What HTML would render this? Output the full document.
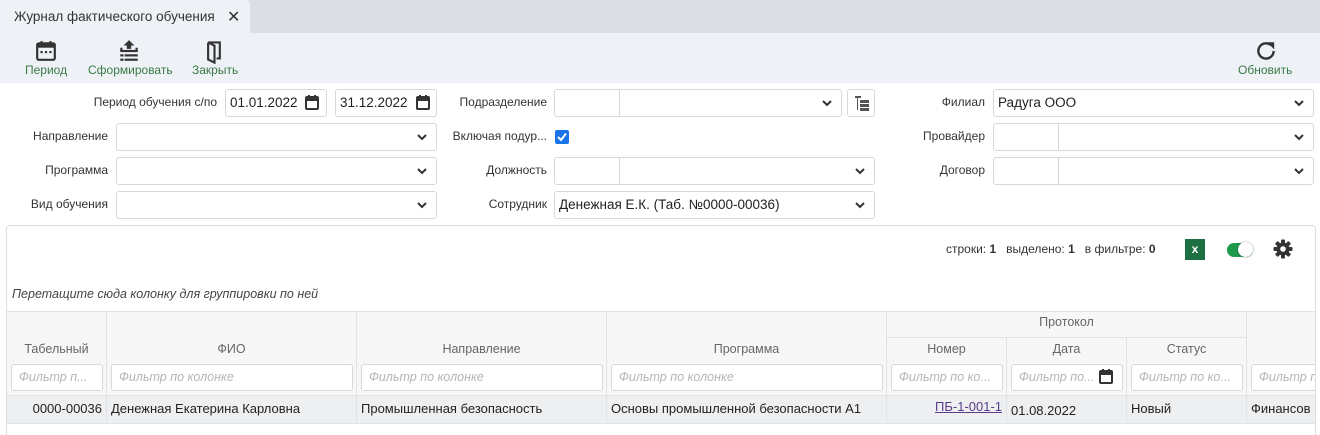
<!DOCTYPE html>
<html><head><meta charset="utf-8"><style>
*{box-sizing:border-box;margin:0;padding:0}
html,body{width:1320px;height:435px;overflow:hidden}
body{background:#fff;font-family:"Liberation Sans","DejaVu Sans",sans-serif;font-size:12px;color:#333;position:relative}
.a{position:absolute}
.lbl{position:absolute;text-align:right;font-size:12px;color:#333}
.inp{position:absolute;border:1px solid #d6d8dd;border-radius:3px;background:#fff;height:28px;font-size:13.5px;color:#222;padding:5px 4px}
.chev{position:absolute;right:8px;top:8px;width:12px;height:10px}
.sep{position:absolute;left:64px;top:0;bottom:0;width:1px;background:#d6d8dd}
.th{position:absolute;border-right:1px solid #e2e3e6;text-align:center;color:#666;font-size:12.5px}
.flt{position:absolute;height:27px;border:1px solid #d6d8dd;border-radius:3px;background:#fff;font-style:italic;color:#b3b5ba;font-size:12.5px;padding:5px 7px;white-space:nowrap;overflow:hidden}
.td{position:absolute;top:396px;height:28px;border-right:1px solid #e2e3e6;font-size:13px;color:#222;padding:5px 4px;white-space:nowrap;overflow:hidden}
.tb{position:absolute;top:63px;color:#3a7a45;font-size:12px}
</style></head><body>
<div class="a" style="left:0;top:0;width:1320px;height:33px;background:#dcdee3"></div>
<div class="a" style="left:0;top:0;width:250px;height:33px;background:#eef1f6;border-radius:0 4px 0 0"></div>
<div class="a" style="left:14px;top:9px;font-size:13.5px;color:#333">Журнал фактического обучения</div>
<div class="a" style="left:227px;top:7px;font-size:16px;font-weight:bold;color:#333">✕</div>
<div class="a" style="left:0;top:33px;width:1320px;height:50px;background:#eef1f6"></div>
<svg class="a" style="left:35px;top:40px" width="22" height="22" viewBox="0 0 20 20"><rect x="2" y="3" width="16" height="15" rx="1.5" fill="none" stroke="#333" stroke-width="2"/><rect x="2" y="3" width="16" height="4" fill="#333"/><rect x="5" y="1" width="2" height="4" fill="#333"/><rect x="13" y="1" width="2" height="4" fill="#333"/><rect x="5" y="10" width="2" height="2" fill="#333"/><rect x="9" y="10" width="2" height="2" fill="#333"/><rect x="13" y="10" width="2" height="2" fill="#333"/></svg>
<div class="tb" style="left:25px">Период</div>
<svg class="a" style="left:118px;top:39px" width="22" height="24" viewBox="0 0 20 22"><path d="M10 1 L5 6 H8 V9 H12 V6 H15 Z" fill="#333"/><rect x="2" y="10" width="16" height="2" fill="#333"/><rect x="2" y="14" width="3" height="2" fill="#333"/><rect x="6" y="14" width="12" height="2" fill="#333"/><rect x="2" y="18" width="3" height="2" fill="#333"/><rect x="6" y="18" width="12" height="2" fill="#333"/><rect x="2" y="8" width="2" height="3" fill="#333"/><rect x="16" y="8" width="2" height="3" fill="#333"/></svg>
<div class="tb" style="left:88px">Сформировать</div>
<svg class="a" style="left:206px;top:40px" width="17" height="24" viewBox="0 0 16 22"><path d="M2 2 H13 V17 H10 M2 2 V18 L8 21 V5 L2 2" fill="none" stroke="#333" stroke-width="2"/></svg>
<div class="tb" style="left:192px">Закрыть</div>
<svg class="a" style="left:1254px;top:39px" width="24" height="24" viewBox="0 0 22 22"><path d="M18 11 A7 7 0 1 1 15.5 5.6" fill="none" stroke="#333" stroke-width="2.2"/><path d="M12 3 H18.5 V9.5 Z" fill="#333"/></svg>
<div class="tb" style="left:1238px">Обновить</div>

<div class="lbl" style="left:60px;width:157px;top:95px">Период обучения с/по</div>
<div class="inp" style="left:225px;top:89px;width:102px">01.01.2022</div>
<svg class="a" style="left:305px;top:95px" width="14" height="15" viewBox="0 0 14 15"><rect x="1" y="2" width="12" height="12" rx="1" fill="none" stroke="#333" stroke-width="2"/><rect x="1" y="2" width="12" height="4" fill="#333"/><rect x="3" y="0" width="2" height="3" fill="#333"/><rect x="9" y="0" width="2" height="3" fill="#333"/></svg>
<div class="inp" style="left:335px;top:89px;width:102px">31.12.2022</div>
<svg class="a" style="left:416px;top:95px" width="14" height="15" viewBox="0 0 14 15"><rect x="1" y="2" width="12" height="12" rx="1" fill="none" stroke="#333" stroke-width="2"/><rect x="1" y="2" width="12" height="4" fill="#333"/><rect x="3" y="0" width="2" height="3" fill="#333"/><rect x="9" y="0" width="2" height="3" fill="#333"/></svg>

<div class="lbl" style="left:0;width:108px;top:129px">Направление</div>
<div class="inp" style="left:116px;top:123px;width:321px"><svg class="chev" viewBox="0 0 12 10"><path d="M2 3 L6 7 L10 3" fill="none" stroke="#333" stroke-width="2"/></svg></div>
<div class="lbl" style="left:0;width:108px;top:163px">Программа</div>
<div class="inp" style="left:116px;top:157px;width:321px"><svg class="chev" viewBox="0 0 12 10"><path d="M2 3 L6 7 L10 3" fill="none" stroke="#333" stroke-width="2"/></svg></div>
<div class="lbl" style="left:0;width:108px;top:197px">Вид обучения</div>
<div class="inp" style="left:116px;top:191px;width:321px"><svg class="chev" viewBox="0 0 12 10"><path d="M2 3 L6 7 L10 3" fill="none" stroke="#333" stroke-width="2"/></svg></div>

<div class="lbl" style="left:440px;width:107px;top:95px">Подразделение</div>
<div class="inp" style="left:554px;top:89px;width:288px"><div class="sep"></div><svg class="chev" viewBox="0 0 12 10"><path d="M2 3 L6 7 L10 3" fill="none" stroke="#333" stroke-width="2"/></svg></div>
<div class="inp" style="left:847px;top:89px;width:28px;padding:0"><svg class="a" style="left:6px;top:5px" width="16" height="17" viewBox="0 0 16 17"><rect x="1" y="1" width="6" height="2" fill="#555"/><rect x="3" y="3" width="1" height="12" fill="#555"/><rect x="6" y="5" width="9" height="3" fill="#555"/><rect x="6" y="9" width="9" height="3" fill="#555"/><rect x="6" y="13" width="9" height="3" fill="#555"/></svg></div>
<div class="lbl" style="left:440px;width:107px;top:129px">Включая подур...</div>
<div class="a" style="left:555px;top:130px;width:14px;height:14px;background:#1a73e8;border-radius:2px"><svg width="14" height="14" viewBox="0 0 14 14"><path d="M3 7 L6 10 L11 3.5" fill="none" stroke="#fff" stroke-width="2"/></svg></div>
<div class="lbl" style="left:440px;width:107px;top:163px">Должность</div>
<div class="inp" style="left:554px;top:157px;width:321px"><div class="sep"></div><svg class="chev" viewBox="0 0 12 10"><path d="M2 3 L6 7 L10 3" fill="none" stroke="#333" stroke-width="2"/></svg></div>
<div class="lbl" style="left:440px;width:107px;top:197px">Сотрудник</div>
<div class="inp" style="left:554px;top:191px;width:321px">Денежная Е.К. (Таб. №0000-00036)<svg class="chev" viewBox="0 0 12 10"><path d="M2 3 L6 7 L10 3" fill="none" stroke="#333" stroke-width="2"/></svg></div>

<div class="lbl" style="left:880px;width:105px;top:95px">Филиал</div>
<div class="inp" style="left:993px;top:89px;width:321px">Радуга ООО<svg class="chev" viewBox="0 0 12 10"><path d="M2 3 L6 7 L10 3" fill="none" stroke="#333" stroke-width="2"/></svg></div>
<div class="lbl" style="left:880px;width:105px;top:129px">Провайдер</div>
<div class="inp" style="left:993px;top:123px;width:321px"><div class="sep"></div><svg class="chev" viewBox="0 0 12 10"><path d="M2 3 L6 7 L10 3" fill="none" stroke="#333" stroke-width="2"/></svg></div>
<div class="lbl" style="left:880px;width:105px;top:163px">Договор</div>
<div class="inp" style="left:993px;top:157px;width:321px"><div class="sep"></div><svg class="chev" viewBox="0 0 12 10"><path d="M2 3 L6 7 L10 3" fill="none" stroke="#333" stroke-width="2"/></svg></div>

<div class="a" style="left:6px;top:225px;width:1310px;height:210px;border:1px solid #dcdde1;border-bottom:none;border-radius:4px 4px 0 0"></div>
<div class="a" style="left:946px;top:242px;font-size:12px;color:#333">строки: <b>1</b>&nbsp;&nbsp; выделено: <b>1</b>&nbsp;&nbsp; в фильтре: <b>0</b></div>
<div class="a" style="left:1185px;top:239px;width:20px;height:21px;background:#1d7044;color:#fff;font-size:12px;font-weight:bold;text-align:center;line-height:21px">x</div>
<div class="a" style="left:1227px;top:243px;width:26px;height:14px;border-radius:7px;background:#1e9a4c"></div>
<div class="a" style="left:1238px;top:242px;width:15px;height:15px;border-radius:50%;background:#fff;box-shadow:0 0 2px rgba(0,0,0,.4)"></div>
<svg class="a" style="left:1273px;top:239px" width="20" height="20" viewBox="0 0 20 20"><g fill="#333"><circle cx="10" cy="10" r="6.5"/><rect x="8" y="0.5" width="4" height="19" rx="1"/><rect x="8" y="0.5" width="4" height="19" rx="1" transform="rotate(45 10 10)"/><rect x="8" y="0.5" width="4" height="19" rx="1" transform="rotate(90 10 10)"/><rect x="8" y="0.5" width="4" height="19" rx="1" transform="rotate(135 10 10)"/></g><circle cx="10" cy="10" r="2.8" fill="#fff"/></svg>
<div class="a" style="left:12px;top:287px;font-style:italic;color:#444;font-size:12.5px">Перетащите сюда колонку для группировки по ней</div>

<div class="a" style="left:7px;top:311px;width:1308px;height:85px;background:#f7f7f8;border-top:1px solid #e2e3e6;border-bottom:1px solid #e2e3e6"></div>
<div class="th" style="left:7px;top:312px;width:100px;height:84px;padding-top:30px">Табельный</div>
<div class="th" style="left:107px;top:312px;width:250px;height:84px;padding-top:30px">ФИО</div>
<div class="th" style="left:357px;top:312px;width:250px;height:84px;padding-top:30px">Направление</div>
<div class="th" style="left:607px;top:312px;width:280px;height:84px;padding-top:30px">Программа</div>
<div class="th" style="left:887px;top:312px;width:360px;height:26px;padding-top:3px;border-bottom:1px solid #e2e3e6">Протокол</div>
<div class="th" style="left:887px;top:338px;width:120px;height:58px;padding-top:4px">Номер</div>
<div class="th" style="left:1007px;top:338px;width:120px;height:58px;padding-top:4px">Дата</div>
<div class="th" style="left:1127px;top:338px;width:120px;height:58px;padding-top:4px">Статус</div>
<div class="flt" style="left:11px;top:364px;width:92px">Фильтр п...</div>
<div class="flt" style="left:111px;top:364px;width:242px">Фильтр по колонке</div>
<div class="flt" style="left:361px;top:364px;width:242px">Фильтр по колонке</div>
<div class="flt" style="left:611px;top:364px;width:272px">Фильтр по колонке</div>
<div class="flt" style="left:891px;top:364px;width:112px">Фильтр по ко...</div>
<div class="flt" style="left:1011px;top:364px;width:112px">Фильтр по...</div>
<svg class="a" style="left:1099px;top:369px" width="14" height="15" viewBox="0 0 14 15"><rect x="1" y="2" width="12" height="12" rx="1" fill="none" stroke="#333" stroke-width="2"/><rect x="1" y="2" width="12" height="4" fill="#333"/><rect x="3" y="0" width="2" height="3" fill="#333"/><rect x="9" y="0" width="2" height="3" fill="#333"/></svg>
<div class="flt" style="left:1131px;top:364px;width:112px">Фильтр по ко...</div>
<div class="flt" style="left:1251px;top:364px;width:64px;border-right:none;border-radius:3px 0 0 3px">Фильтр по</div>

<div class="a" style="left:7px;top:396px;width:1308px;height:28px;background:#eeeff1;border-bottom:1px solid #e2e3e6"></div>
<div class="td" style="left:7px;width:100px;text-align:right">0000-00036</div>
<div class="td" style="left:107px;width:250px">Денежная Екатерина Карловна</div>
<div class="td" style="left:357px;width:250px">Промышленная безопасность</div>
<div class="td" style="left:607px;width:280px">Основы промышленной безопасности А1</div>
<div class="td" style="left:887px;width:120px;text-align:right;color:#5a3c8c;text-decoration:underline;padding-top:3px">ПБ-1-001-1</div>
<div class="td" style="left:1007px;width:120px;padding-top:7px">01.08.2022</div>
<div class="td" style="left:1127px;width:120px">Новый</div>
<div class="td" style="left:1247px;width:68px;border:none">Финансов</div>
</body></html>
